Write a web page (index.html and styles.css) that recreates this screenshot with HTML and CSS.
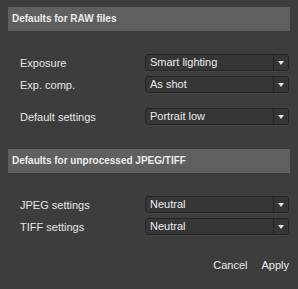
FILE: index.html
```html
<!DOCTYPE html>
<html lang="en">
<head>
    <meta charset="UTF-8">
    <title>Import defaults</title>
    <link rel="stylesheet" href="styles.css">
</head>
<body>
    <div class="panel">
        <div class="section-title">Defaults for RAW files</div>
        <div class="rows first">
            <div class="row">
                <span class="label">Exposure</span>
                <div class="select"><span class="value">Smart lighting</span><span class="arrow"></span></div>
            </div>
            <div class="row">
                <span class="label">Exp. comp.</span>
                <div class="select"><span class="value">As shot</span><span class="arrow"></span></div>
            </div>
        </div>
        <div class="rows second">
            <div class="row">
                <span class="label">Default settings</span>
                <div class="select"><span class="value">Portrait low</span><span class="arrow"></span></div>
            </div>
        </div>

        <div class="section-title lower">Defaults for unprocessed JPEG/TIFF</div>
        <div class="rows first">
            <div class="row">
                <span class="label">JPEG settings</span>
                <div class="select"><span class="value">Neutral</span><span class="arrow"></span></div>
            </div>
            <div class="row">
                <span class="label">TIFF settings</span>
                <div class="select"><span class="value">Neutral</span><span class="arrow"></span></div>
            </div>
        </div>

        <div class="buttons">
            <span class="btn">Cancel</span>
            <span class="btn">Apply</span>
        </div>
    </div>
</body>
</html>
```

FILE: styles.css
```css
html, body {
    margin: 0;
    padding: 0;
    background: #3d3d3d;
}
body {
    font-family: "Liberation Sans", Arial, sans-serif;
    font-size: 11px;
    color: #e6e6e6;
    width: 298px;
    height: 289px;
    overflow: hidden;
}
.panel {
    padding: 7px 8px 0 8px;
}
.section-title {
    height: 24px;
    line-height: 23px;
    background: #5f5f5f;
    padding-left: 4px;
    font-size: 10px;
    font-weight: bold;
    color: #ececec;
}
.section-title.lower {
    margin-top: 24px;
}
.rows {
    display: flex;
    flex-direction: column;
    gap: 5px;
}
.rows.first {
    margin-top: 23px;
}
.rows.second {
    margin-top: 15px;
}
.row {
    display: flex;
    align-items: center;
    height: 17px;
}
.label {
    width: 137px;
    padding-left: 12px;
    box-sizing: border-box;
}
.select {
    display: flex;
    width: 144px;
    height: 17px;
    box-sizing: border-box;
    border: 1px solid #252525;
    border-radius: 3px;
    background: #363636;
    box-shadow: 0 1px 0 rgba(255,255,255,0.04);
}
.value {
    flex: 1;
    padding-left: 4px;
    line-height: 15px;
    color: #ededed;
}
.arrow {
    width: 14px;
    border-left: 1px solid #252525;
    position: relative;
}
.arrow::after {
    content: "";
    position: absolute;
    left: 4px;
    top: 6px;
    border-left: 3.5px solid transparent;
    border-right: 3.5px solid transparent;
    border-top: 4px solid #e8e8e8;
}
.buttons {
    display: flex;
    justify-content: flex-end;
    gap: 14px;
    margin-top: 24px;
    padding-right: 1px;
}
.btn {
    color: #ececec;
}
```
